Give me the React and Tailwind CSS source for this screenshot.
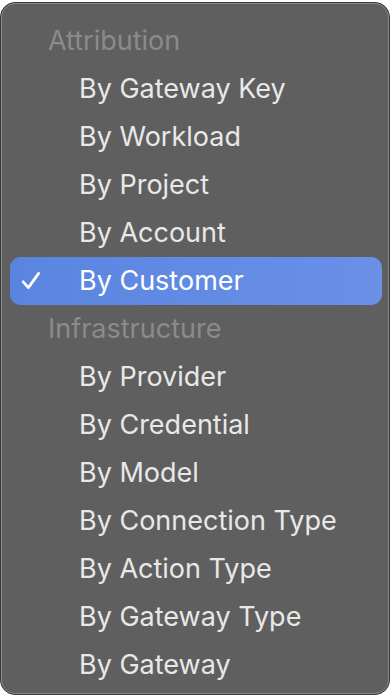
const groups = [
  {
    title: 'Attribution',
    items: ['By Gateway Key', 'By Workload', 'By Project', 'By Account', 'By Customer'],
  },
  {
    title: 'Infrastructure',
    items: [
      'By Provider',
      'By Credential',
      'By Model',
      'By Connection Type',
      'By Action Type',
      'By Gateway Type',
      'By Gateway',
    ],
  },
]

function CheckMark() {
  return (
    <svg width="20" height="20" viewBox="0 0 20 20" fill="none">
      <path
        d="M2.2 10.8 L7.4 16.6 L17.6 2.4"
        stroke="currentColor"
        strokeWidth="2.7"
        strokeLinecap="round"
        strokeLinejoin="round"
      />
    </svg>
  )
}

export default function App() {
  const selected = 'By Customer'

  return (
    <div className="h-[697px] w-[390px] bg-white font-['Inter','Liberation_Sans',sans-serif] text-[27px]">
      <div className="h-full py-[2px]">
        <div className="h-full rounded-[15px] border border-[#3a3a3a] bg-[#2a2a2a]">
          <div className="flex h-full flex-col rounded-[14px] border border-[#8a8a8a] bg-[#5f5f5f] pl-[8px] pr-[6px] pt-[13px]">
            {groups.map((group) => (
              <div key={group.title}>
                <div className="flex h-[48px] items-center pl-[38px] text-[#8b8b8b]">{group.title}</div>
                {group.items.map((item) => {
                  const active = item === selected
                  return (
                    <div
                      key={item}
                      className={`flex h-[48px] items-center rounded-[11px] ${
                        active ? 'bg-gradient-to-r from-[#5985e0] to-[#6a90e8] text-white' : 'text-[#e8e8e8]'
                      }`}
                    >
                      <div className="flex w-[69px] items-center pl-[11px]">
                        {active && <CheckMark />}
                      </div>
                      <span>{item}</span>
                    </div>
                  )
                })}
              </div>
            ))}
          </div>
        </div>
      </div>
    </div>
  )
}
